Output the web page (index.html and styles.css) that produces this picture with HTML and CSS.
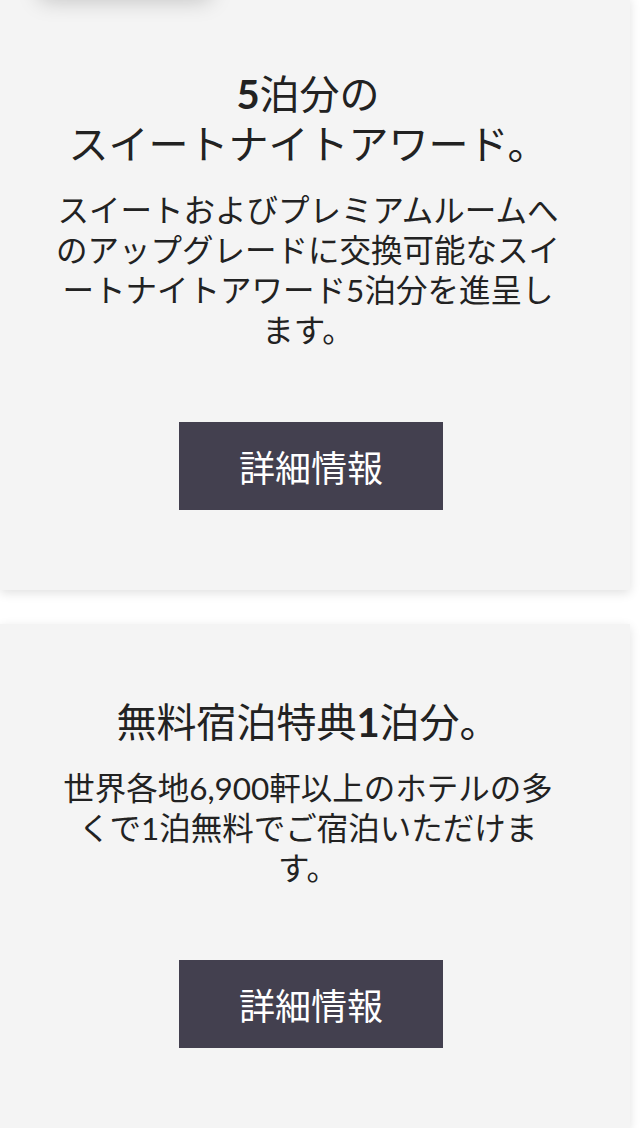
FILE: index.html
```html
<!DOCTYPE html>
<html lang="ja">
<head>
    <meta charset="UTF-8">
    <meta name="viewport" content="width=device-width, initial-scale=1.0">
    <title>特典</title>
    <link rel="stylesheet" href="styles.css">
</head>
<body>
    <div class="benefits">
        <div class="card">
            <div class="card-tab"></div>
            <h2 class="card-title"><b>5</b>泊分の<br>スイートナイトアワード。</h2>
            <p class="card-text">スイートおよびプレミアムルームへのアップグレードに交換可能なスイートナイトアワード5泊分を進呈します。</p>
            <a class="more-button" href="#">詳細情報</a>
        </div>

        <div class="card">
            <h2 class="card-title">無料宿泊特典<b>1</b>泊分。</h2>
            <p class="card-text">世界各地6,900軒以上のホテルの多くで1泊無料でご宿泊いただけます。</p>
            <a class="more-button" href="#">詳細情報</a>
        </div>
    </div>
</body>
</html>
```

FILE: styles.css
```css
* {
    margin: 0;
    padding: 0;
    box-sizing: border-box;
}

body {
    font-family: Lato, "Noto Sans CJK JP", sans-serif;
    background: #fff;
    color: #222;
    overflow: hidden;
}

.benefits {
    display: flex;
    flex-direction: column;
    gap: 34px;
    width: 630px;
    margin-top: -4px;
}

.card {
    position: relative;
    background: #f4f4f4;
    box-shadow: 0 3px 10px rgba(0,0,0,0.12);
    padding: 73px 14px 80px 0;
    display: flex;
    flex-direction: column;
    align-items: center;
    text-align: center;
}

/* shadow of the element sitting above the first card */
.card-tab {
    position: absolute;
    top: -40px;
    left: 40px;
    width: 170px;
    height: 40px;
    background: #f4f4f4;
    box-shadow: 0 4px 22px rgba(0,0,0,0.22);
}

.card-title {
    font-size: 40px;
    line-height: 50px;
    font-weight: 400;
}

.card-title b {
    font-weight: 700;
}

.card-text {
    width: 506px;
    margin-top: 21px;
    font-size: 31.5px;
    line-height: 40px;
}

.more-button {
    display: flex;
    align-items: center;
    justify-content: center;
    width: 264px;
    height: 88px;
    margin-top: 72px;
    margin-left: 6px;
    background: #43404f;
    color: #fff;
    font-size: 36px;
    text-decoration: none;
}
```
